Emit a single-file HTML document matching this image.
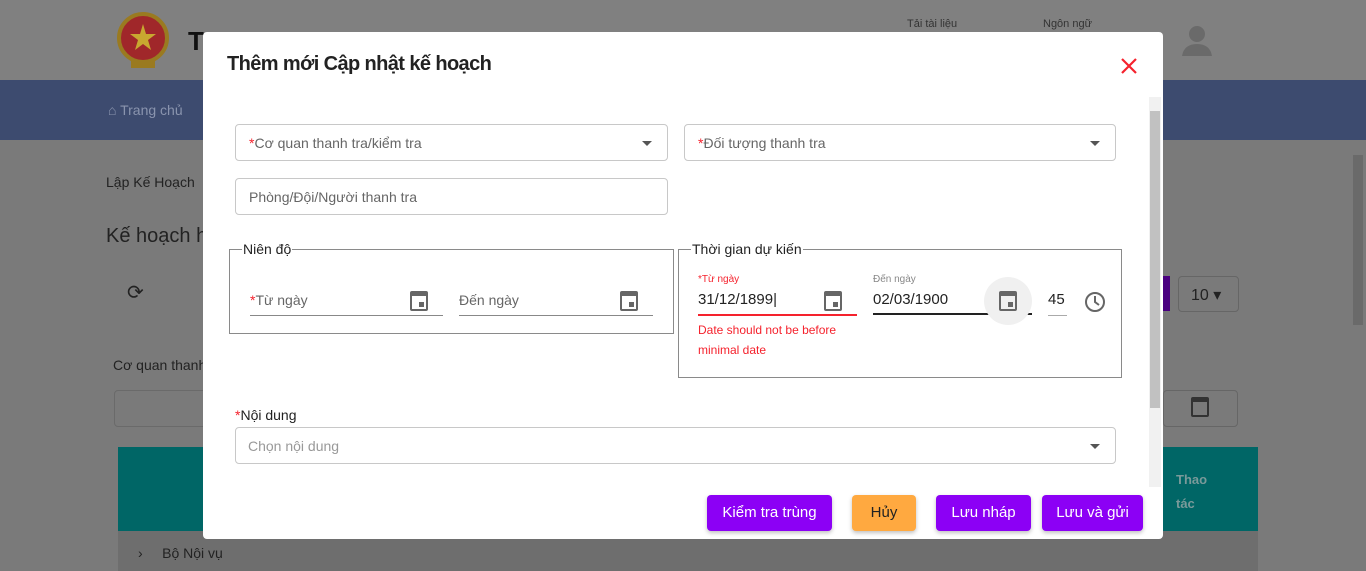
<!DOCTYPE html>
<html><head><meta charset="utf-8"><style>
*{box-sizing:border-box;margin:0;padding:0}
body{width:1366px;height:571px;overflow:hidden;position:relative;background:#7a7a7a;font-family:"Liberation Sans","Noto Sans CJK SC",sans-serif;}
.abs{position:absolute}
.hdr{left:0;top:0;width:1366px;height:80px;background:#808080}
.nav{left:0;top:80px;width:1366px;height:60px;background:#3d4b6f}
.modal{left:203px;top:32px;width:960px;height:507px;background:#fff;border-radius:4px}
.field{border:1px solid #c8c8c8;border-radius:4px;height:37px;font-size:14px;color:#666;padding:0 13px;line-height:36px}
.caret{position:absolute;right:15px;top:16px;width:0;height:0;border-left:5px solid transparent;border-right:5px solid transparent;border-top:5px solid #555}
.req{color:#f5222d}
fieldset{position:absolute;border:1.5px solid #8a8a8a}
legend{font-size:14px;color:#222;padding:0 1px;margin-left:12px}
.btn{position:absolute;top:495px;height:36px;border-radius:4px;color:#fff;font-size:15px;text-align:center;line-height:36px;background:#8c00f5;box-shadow:0 2px 4px rgba(0,0,0,.25)}
.cal{position:absolute;width:18px;height:20px}
</style></head><body>
<div class="abs hdr"></div>
<svg class="abs" style="left:113px;top:10px" width="60" height="62"><circle cx="30" cy="28" r="24" fill="#a0272a" stroke="#9a7a20" stroke-width="4"/><polygon points="30,14 33,24 43,24 35,30 38,40 30,34 22,40 25,30 17,24 27,24" fill="#c8a830"/><rect x="18" y="50" width="24" height="8" fill="#9a7a20"/></svg>
<div class="abs" style="left:188px;top:26px;font-size:26px;color:#111;font-weight:bold">T</div>
<div class="abs" style="left:907px;top:18px;font-size:11px;color:#333">Tải tài liệu</div>
<div class="abs" style="left:1043px;top:18px;font-size:11px;color:#333">Ngôn ngữ</div>
<svg class="abs" style="left:1180px;top:22px" width="34" height="34"><circle cx="17" cy="12" r="8" fill="#6a6a6a"/><path d="M2 34 Q4 22 17 22 Q30 22 32 34Z" fill="#6a6a6a"/></svg>
<div class="abs nav"></div>
<div class="abs" style="left:108px;top:102px;font-size:14px;color:#8a94ae">⌂ Trang chủ</div>
<div class="abs" style="left:106px;top:174px;font-size:14px;color:#222">Lập Kế Hoạch</div>
<div class="abs" style="left:106px;top:225px;font-size:20px;color:#222">Kế hoạch h</div>
<div class="abs" style="left:127px;top:280px;font-size:20px;color:#222">⟳</div>
<div class="abs" style="left:113px;top:357px;font-size:14px;color:#222">Cơ quan thanh</div>
<div class="abs" style="left:114px;top:390px;width:100px;height:37px;border:1px solid #6a6a6a;border-radius:4px"></div>
<div class="abs" style="left:1163px;top:276px;width:7px;height:35px;background:#4a0080"></div>
<div class="abs" style="left:1178px;top:276px;width:61px;height:36px;border:1px solid #666;border-radius:4px;font-size:16px;color:#222;padding:8px 12px">10 ▾</div>
<div class="abs" style="left:1163px;top:390px;width:75px;height:37px;border:1px solid #666;border-radius:4px"></div>
<div class="abs" style="left:1191px;top:397px;width:18px;height:20px;border:2px solid #333;border-top-width:5px;border-radius:2px"></div>
<div class="abs" style="left:118px;top:447px;width:1140px;height:84px;background:#006666"></div>
<div class="abs" style="left:1176px;top:468px;font-size:13px;color:#7a9a9a;line-height:24px;font-weight:bold">Thao<br>tác</div>
<div class="abs" style="left:118px;top:531px;width:1140px;height:40px;background:#6e6e6e"></div>
<div class="abs" style="left:138px;top:545px;font-size:14px;color:#222">›&nbsp;&nbsp;&nbsp;&nbsp;&nbsp;Bộ Nội vụ</div>
<div class="abs" style="left:1351px;top:140px;width:15px;height:431px;background:#7a7a7a"></div>
<div class="abs" style="left:1353px;top:155px;width:10px;height:170px;background:#6a6a6a"></div>

<div class="abs modal"></div>
<div class="abs" style="left:227px;top:53px;font-size:20px;color:#222;font-weight:bold;letter-spacing:-.6px">Thêm mới Cập nhật kế hoạch</div>
<svg class="abs" style="left:1120px;top:57px" width="18" height="18"><path d="M2 2L16 16M16 2L2 16" stroke="#f5222d" stroke-width="2.2"/></svg>
<div class="abs" style="left:1149px;top:97px;width:12px;height:390px;background:#f1f1f1"></div>
<div class="abs" style="left:1150px;top:111px;width:10px;height:297px;background:#c1c1c1"></div>

<div class="abs field" style="left:235px;top:124px;width:433px"><span class="req">*</span>Cơ quan thanh tra/kiểm tra<span class="caret"></span></div>
<div class="abs field" style="left:684px;top:124px;width:432px"><span class="req">*</span>Đối tượng thanh tra<span class="caret"></span></div>
<div class="abs field" style="left:235px;top:178px;width:433px">Phòng/Đội/Người thanh tra</div>

<fieldset style="left:229px;top:241px;width:445px;height:93px"><legend>Niên độ</legend></fieldset>
<div class="abs" style="left:250px;top:292px;font-size:14px;color:#666"><span class="req">*</span>Từ ngày</div>
<div class="abs" style="left:250px;top:315px;width:193px;height:1px;background:#888"></div>
<div class="abs" style="left:459px;top:292px;font-size:14px;color:#666">Đến ngày</div>
<div class="abs" style="left:459px;top:315px;width:194px;height:1px;background:#888"></div>

<fieldset style="left:678px;top:241px;width:444px;height:137px"><legend>Thời gian dự kiến</legend></fieldset>
<div class="abs" style="left:698px;top:274px;font-size:10px;color:#f5222d">*Từ ngày</div>
<div class="abs" style="left:698px;top:291px;font-size:15px;color:#222">31/12/1899|</div>
<div class="abs" style="left:698px;top:314px;width:159px;height:2px;background:#f5222d"></div>
<div class="abs" style="left:698px;top:320px;font-size:12px;color:#f5222d;line-height:20px">Date should not be before<br>minimal date</div>
<div class="abs" style="left:873px;top:274px;font-size:10px;color:#888">Đến ngày</div>
<div class="abs" style="left:873px;top:291px;font-size:15px;color:#222">02/03/1900</div>
<div class="abs" style="left:873px;top:313px;width:159px;height:2px;background:#222"></div>
<div class="abs" style="left:984px;top:277px;width:48px;height:48px;border-radius:50%;background:#f0f0f0"></div>
<div class="abs" style="left:1048px;top:291px;font-size:15px;color:#222">45</div>
<div class="abs" style="left:1048px;top:315px;width:19px;height:1px;background:#aaa"></div>
<svg class="abs" style="left:1084px;top:291px" width="22" height="22"><circle cx="11" cy="11" r="9" fill="none" stroke="#666" stroke-width="2"/><path d="M11 5V11L15 14" fill="none" stroke="#666" stroke-width="2"/></svg>

<div class="abs cal" style="left:410px;top:291px;border:2px solid #666;border-top-width:5px;border-radius:2px"><div style="position:absolute;right:2px;bottom:2px;width:5px;height:5px;background:#666"></div></div>
<div class="abs cal" style="left:620px;top:291px;border:2px solid #666;border-top-width:5px;border-radius:2px"><div style="position:absolute;right:2px;bottom:2px;width:5px;height:5px;background:#666"></div></div>
<div class="abs cal" style="left:824px;top:291px;border:2px solid #666;border-top-width:5px;border-radius:2px"><div style="position:absolute;right:2px;bottom:2px;width:5px;height:5px;background:#666"></div></div>
<div class="abs cal" style="left:999px;top:291px;border:2px solid #666;border-top-width:5px;border-radius:2px"><div style="position:absolute;right:2px;bottom:2px;width:5px;height:5px;background:#666"></div></div>

<div class="abs" style="left:235px;top:407px;font-size:14px;color:#222"><span class="req">*</span>Nội dung</div>
<div class="abs field" style="left:235px;top:427px;width:881px;color:#999;padding-left:12px">Chọn nội dung<span class="caret"></span></div>

<div class="btn" style="left:707px;width:125px">Kiểm tra trùng</div>
<div class="btn" style="left:852px;width:64px;background:#ffa940;color:#222">Hủy</div>
<div class="btn" style="left:936px;width:95px">Lưu nháp</div>
<div class="btn" style="left:1042px;width:101px">Lưu và gửi</div>
</body></html>
